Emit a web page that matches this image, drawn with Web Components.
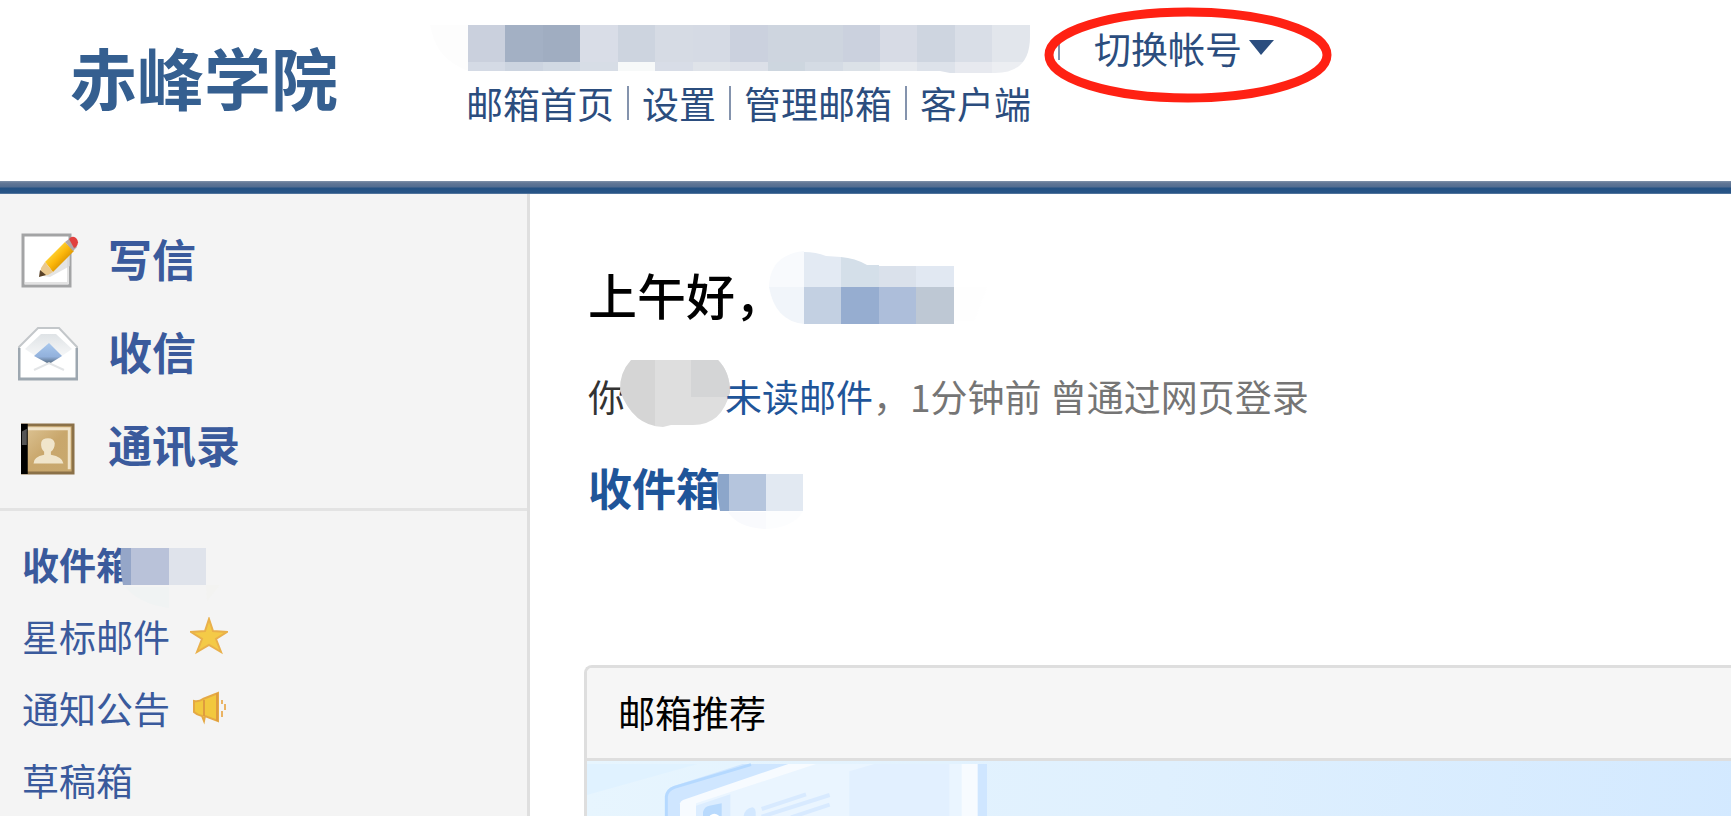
<!DOCTYPE html>
<html lang="zh-CN">
<head>
<meta charset="utf-8">
<title>赤峰学院邮箱</title>
<style>
  html, body {
    margin: 0;
    height: 100%;
  }

  body {
    overflow: hidden;
    background: #fff;
    color: #000;
    font-family: "Noto Sans CJK SC", sans-serif;
    font-size: 37px;
    line-height: 56px;
  }
</style>
</head>
<body>
<mail-app>
  <mail-header slot="header" name="赤峰学院"></mail-header>

  <mail-sidebar slot="sidebar">
    <side-action slot="actions" icon="compose">写信</side-action>
    <side-action slot="actions" icon="inbox">收信</side-action>
    <side-action slot="actions" icon="contacts">通讯录</side-action>
    <side-folder masked>收件箱</side-folder>
    <side-folder icon="star">星标邮件</side-folder>
    <side-folder icon="horn">通知公告</side-folder>
    <side-folder>草稿箱</side-folder>
  </mail-sidebar>

  <mail-welcome></mail-welcome>
  <mail-card>
    <span slot="title">邮箱推荐</span>
    <promo-banner></promo-banner>
  </mail-card>
</mail-app>

<script>
(function () {
  function define(name, html, setup) {
    const template = document.createElement('template');
    template.innerHTML = html;

    window.customElements.define(name, class extends HTMLElement {
      constructor() {
        super();
        this.attachShadow({mode: 'open'});
        this.shadowRoot.appendChild(template.content.cloneNode(true));
      }

      connectedCallback() {
        if (setup) {
          setup(this, this.shadowRoot);
        }
      }
    });
  }

  const icons = {
    compose: `
      <svg width="58" height="56" viewBox="0 0 58 56">
        <defs>
          <linearGradient id="wood" x1="0" y1="0" x2="1" y2="1">
            <stop offset=".2" stop-color="#ffe04a"/>
            <stop offset=".5" stop-color="#fbb60a"/>
            <stop offset=".8" stop-color="#c98300"/>
          </linearGradient>
        </defs>
        <path d="M2 2H49V53H2Z" fill="#fff" stroke="#a3a4a5" stroke-width="3"/>
        <path d="M4 50H47V23" fill="none" stroke="#e3e3e3" stroke-width="2"/>
        <path d="M22 43L42 25 49 16V33L29 44Z" fill="#d9d9d9" opacity=".7"/>
        <path d="M24 29L44 9 53 18 32 39Z" fill="url(#wood)"/>
        <path d="M24 29L20 35 19 43 27 42 32 39Z" fill="#eac990"/>
        <path d="M19 37L18 44 25 42Z" fill="#594127"/>
        <path d="M44 9L48 6 56 14 52 18Z" fill="#b0a7a8"/>
        <path d="M48 6Q51 2 55 5Q59 9 55 14L53 15Z" fill="#e1403f"/>
      </svg>`,
    inbox: `
      <svg width="60" height="56" viewBox="0 0 60 56">
        <defs>
          <linearGradient id="paper" x1="0" y1="0" x2="0" y2="1">
            <stop offset="0" stop-color="#dfe3e6"/>
            <stop offset="1" stop-color="#fff"/>
          </linearGradient>
          <linearGradient id="letter" x1="0" y1="0" x2="0" y2="1">
            <stop offset="0" stop-color="#a9c8ed"/>
            <stop offset=".65" stop-color="#92b1dc"/>
            <stop offset="1" stop-color="#526579"/>
          </linearGradient>
        </defs>
        <path d="M1 21L20 2H41L59 21V53H1Z" fill="#fff" stroke="#c3c7ca" stroke-width="2"/>
        <path d="M7 23L23 8H38L54 23 31 39Z" fill="url(#paper)"/>
        <path d="M16 30L31 17 44 30 31 38Z" fill="url(#letter)"/>
        <path d="M16 44L31 37 46 44" fill="none" stroke="#e3e5e7" stroke-width="2"/>
        <path d="M1 22V53H59V22" fill="none" stroke="#9da7b0" stroke-width="3"/>
      </svg>`,
    contacts: `
      <svg width="54" height="56" viewBox="0 -4 56 56">
        <defs>
          <linearGradient id="leather" x1="0" y1="0" x2="1" y2="1">
            <stop offset="0" stop-color="#dfc799"/>
            <stop offset=".5" stop-color="#c9a76c"/>
            <stop offset="1" stop-color="#c8a96f"/>
          </linearGradient>
        </defs>
        <path d="M1 1H54V51H1Z" fill="url(#leather)" stroke="#8b7148" stroke-width="3"/>
        <path d="M5 5H50V47" fill="none" stroke="#f1e4c9" stroke-width="3"/>
        <path d="M0 0H7V52H0Z" fill="#000"/>
        <path d="M1 8L6 5V22H1Z" fill="#555"/>
        <path d="M13 41Q13 34 24 32V29Q20 25 21 19Q22 15 28 15Q34 15 35 20Q35 26 31 29V32Q43 34 44 41Z" fill="#f0e5cb"/>
      </svg>`,
    star: `
      <svg width="38" height="38" viewBox="0 0 38 38">
        <path d="M19 2L23 14 37 15 26 22 31 35 19 28 7 35 12 22 1 15 15 14Z" fill="#f4ca47" stroke="#e9b04b" stroke-width="2"/>
      </svg>`,
    horn: `
      <svg width="38" height="38" viewBox="0 0 38 38">
        <path d="M4 12Q9 13 13 10L28 4V32L15 27 14 32 12 27Q7 26 4 23Z" fill="#f2c83e" stroke="#e5a944" stroke-width="2"/>
        <path d="M14 11V27M27 4V32" stroke="#df9c3e" stroke-width="2"/>
        <path d="M32 11V15M35 15V21M32 22V28" stroke="#eab363" stroke-width="2"/>
      </svg>`
  };

  // Pixelated blocks that hide private data, one drawing per place
  const masks = {
    account: `
      <svg width="600" height="50" viewBox="0 0 600 50">
        <defs><clipPath id="round"><path d="M0 0H600V12Q600 48 565 48H520L510 46H38Q8 34 2 8Z"/></clipPath></defs>
        <g class="cells" clip-path="url(#round)"></g>
      </svg>`,
    name: `
      <svg width="220" height="76" viewBox="0 0 220 76">
        <path d="M35 0Q0 4 0 37H35Z" fill="#f8fafd"/>
        <path d="M0 36H35V73Q6 70 0 36Z" fill="#f1f5fa"/>
        <path d="M35 1Q47 1 57 5L72 6V36H35Z" fill="#e3eaf3"/>
        <path d="M72 6Q86 7 98 14H110V36H72Z" fill="#d4dfe9"/>
        <path d="M110 15H147V36H110Z" fill="#dae1eb"/>
        <path d="M147 15H185V36H147Z" fill="#e1e8f2"/>
        <path d="M35 36H72V73H35Z" fill="#c3d0e2"/>
        <path d="M72 36H110V73H72Z" fill="#96add0"/>
        <path d="M110 36H147V73H110Z" fill="#adbeda"/>
        <path d="M147 36H185V73H147Z" fill="#bec8d4"/>
        <path d="M185 36H218L205 70H185Z" fill="#fefefe"/>
      </svg>`,
    unread: `
      <svg width="112" height="68" viewBox="0 0 112 68">
        <defs><clipPath id="blob"><path d="M12 0H99Q111 12 111 32Q103 65 74 65H52L44 67Q14 66 1 31Q0 13 12 0Z"/></clipPath></defs>
        <g clip-path="url(#blob)">
          <path d="M0 0H36V68H0Z" fill="#d5d5d5"/>
          <path d="M36 0H112V68H36Z" fill="#dedede"/>
          <path d="M72 0H112V37H72Z" fill="#d4d5d6"/>
        </g>
      </svg>`,
    folder: `
      <svg width="96" height="62" viewBox="0 0 96 62">
        <path d="M0 0H10V37H2Q-2 18 0 0Z" fill="#95a6c8"/>
        <path d="M10 0H48V37H10Z" fill="#b9c2d9"/>
        <path d="M48 0H85V37H48Z" fill="#dfe3eb"/>
        <path d="M5 39H48V60Q18 56 5 39Z" fill="#f0f3f3"/>
        <path d="M85 37H99L86 53Z" fill="#f3f3f1"/>
      </svg>`,
    count: `
      <svg width="88" height="56" viewBox="0 0 88 56">
        <path d="M0 0H11V37H2Q-2 18 0 0Z" fill="#8ca6ca"/>
        <path d="M11 0H48V37H11Z" fill="#b5c5dd"/>
        <path d="M48 0H85V37H48Z" fill="#e2e9f2"/>
        <path d="M10 38H48V55Q20 54 10 38Z" fill="#f9fafd"/>
        <path d="M48 37H85Q75 54 48 55Z" fill="#fcfdfe"/>
      </svg>`
  };

  const accountCells = [
    ['#cad0dd', '#d4dae5'], ['#a3b0c4', '#ccd4e0'], ['#a0adc1', '#d1d9e3'], ['#d9dde7', '#d7dde6'],
    ['#cdd4df', '#f7f9f9'], ['#d6dbe4', '#d8dde7'], ['#d5dae4', '#dfe3e9'], ['#cbd1de', '#dce0e8'],
    ['#ced5df', '#cdd6df'], ['#ced5df', '#d4dbe4'], ['#cbd1de', '#dbe1e7'], ['#d7dbe5', '#e6e9ee'],
    ['#ced5e0', '#dde2ea'], ['#d9dee7', '#e7e9ef'], ['#e2e6ec', '#eceef2']
  ];

  define('pixel-mask', `
    <style>
      :host {
        display: block;
        flex: none;
      }

      svg {
        display: block;
        overflow: visible;
      }
    </style>
  `, (host, root) => {
    root.innerHTML += masks[host.getAttribute('kind')];
    const cells = root.querySelector('.cells');
    if (cells) {
      let shapes = '<rect width="38" height="46" fill="#fdfdfd"/>';
      accountCells.forEach(([top, bottom], i) => {
        const x = Math.round(38 + i * 37.45);
        shapes += `<rect x="${x}" width="38" height="37" fill="${top}"/>
                   <rect x="${x}" y="37" width="38" height="12" fill="${bottom}"/>`;
      });
      cells.innerHTML = shapes;
    }
  });

  define('mail-app', `
    <style>
      :host {
        display: flex;
        flex-direction: column;
        min-height: 100vh;
      }

      .body {
        display: flex;
        flex: 1;
      }

      main {
        flex: 1;
        min-width: 0;
        padding: 70px 0 0 56px;
      }
    </style>
    <slot name="header"></slot>
    <div class="body">
      <slot name="sidebar"></slot>
      <main><slot></slot></main>
    </div>
  `);

  define('mail-header', `
    <style>
      :host {
        display: block;
      }

      header {
        display: flex;
        align-items: flex-start;
        padding: 20px 0;
        height: 141px;
      }

      .logo {
        flex: none;
        width: 360px;
        padding: 16px 0 0 70px;
        color: #355f90;
        font-size: 67px;
        font-weight: 700;
        line-height: 80px;
      }

      .account, nav {
        display: flex;
        align-items: center;
        white-space: nowrap;
      }

      .account {
        height: 55px;
      }

      pixel-mask {
        height: 46px;
      }

      nav {
        gap: 13px;
        padding: 0 36px;
      }

      a, button {
        color: #2b4d7e;
        text-decoration: none;
      }

      i {
        width: 2px;
        height: 34px;
        background: #8493ad;
      }

      .switch {
        position: relative;
        display: flex;
        align-items: center;
        padding-left: 28px;
      }

      .switch i {
        height: 24px;
        margin-right: 34px;
      }

      .ring {
        position: absolute;
        left: 13px;
        top: -14px;
        pointer-events: none;
      }

      button {
        display: flex;
        align-items: center;
        gap: 7px;
        margin: 0;
        padding: 0;
        border: 0;
        background: none;
        font: inherit;
        cursor: pointer;
      }

      .bar {
        height: 13px;
        background: linear-gradient(#7f91a9 0, #627796 2px, #526c90 6px, #245183 7px, #285587 12px, #7791b0);
      }
    </style>
    <header>
      <div class="logo"></div>
      <div>
        <div class="account">
          <pixel-mask kind="account"></pixel-mask>
          <div class="switch">
            <i></i>
            <button type="button">切换帐号<svg width="25" height="15" viewBox="0 0 25 15"><path d="M0 0H25L12 15Z" fill="#2b4d7e"/></svg></button>
            <svg class="ring" width="290" height="98" viewBox="0 0 290 98">
              <ellipse cx="145" cy="49" rx="139" ry="43" fill="none" stroke="#ff2113" stroke-width="9"/>
            </svg>
          </div>
        </div>
        <nav>
          <a href="#">邮箱首页</a><i></i><a href="#">设置</a><i></i><a href="#">管理邮箱</a><i></i><a href="#">客户端</a>
        </nav>
      </div>
    </header>
    <div class="bar"></div>
  `, (host, root) => {
    root.querySelector('.logo').textContent = host.getAttribute('name');
  });

  define('mail-sidebar', `
    <style>
      :host {
        display: block;
        box-sizing: border-box;
        flex: none;
        width: 530px;
        border-right: 3px solid #dfdfdf;
        background: #f4f4f4;
      }

      .actions {
        padding: 20px 0 15px;
        border-bottom: 3px solid #e3e3e3;
      }

      .folders {
        padding-top: 17px;
      }
    </style>
    <div class="actions"><slot name="actions"></slot></div>
    <div class="folders"><slot></slot></div>
  `);

  define('side-action', `
    <style>
      :host {
        display: block;
      }

      a {
        display: flex;
        align-items: center;
        height: 93px;
        color: #3a5a9c;
        font-size: 44px;
        font-weight: 700;
        text-decoration: none;
      }

      .icon {
        box-sizing: border-box;
        width: 108px;
        padding-left: 21px;
      }

      :host([icon="inbox"]) .icon {
        padding-left: 18px;
      }

      .label {
        padding-bottom: 6px;
      }

      svg {
        display: block;
      }
    </style>
    <a href="#"><span class="icon"></span><span class="label"><slot></slot></span></a>
  `, (host, root) => {
    root.querySelector('.icon').innerHTML = icons[host.getAttribute('icon')];
  });

  define('side-folder', `
    <style>
      :host {
        display: block;
      }

      a {
        position: relative;
        display: flex;
        align-items: center;
        gap: 20px;
        height: 72px;
        padding-left: 22px;
        color: #3a5a9c;
        text-decoration: none;
      }

      :host([masked]) a {
        font-weight: 700;
      }

      pixel-mask {
        position: absolute;
        left: 121px;
        top: 20px;
      }

      svg {
        display: block;
      }
    </style>
    <a href="#"><slot></slot></a>
  `, (host, root) => {
    const link = root.querySelector('a');
    if (host.hasAttribute('masked')) {
      link.insertAdjacentHTML('beforeend', '<pixel-mask kind="folder"></pixel-mask>');
    }
    if (host.hasAttribute('icon')) {
      link.insertAdjacentHTML('beforeend', icons[host.getAttribute('icon')]);
    }
  });

  define('mail-welcome', `
    <style>
      :host {
        display: block;
        padding-left: 2px;
        white-space: nowrap;
      }

      h1, p {
        display: flex;
        margin: 0;
      }

      h1 {
        height: 104px;
        font-size: 49px;
        font-weight: 500;
        line-height: 60px;
      }

      h1 pixel-mask {
        margin: -13px 0 0 -15px;
      }

      .status {
        height: 95px;
        color: #757575;
      }

      .status b {
        color: #333;
        font-weight: 400;
      }

      .status pixel-mask {
        margin: -8px -6px 0;
      }

      a {
        color: #1f5599;
        text-decoration: none;
      }

      .inbox {
        height: 202px;
        font-size: 44px;
        font-weight: 700;
        line-height: 48px;
      }

      .inbox pixel-mask {
        margin: 11px 0 0 -2px;
      }
    </style>
    <h1>上午好，<pixel-mask kind="name"></pixel-mask></h1>
    <p class="status"><b>你</b><pixel-mask kind="unread"></pixel-mask><a href="#">未读邮件</a><span>，1分钟前 曾通过网页登录</span></p>
    <p class="inbox"><a href="#">收件箱</a><pixel-mask kind="count"></pixel-mask></p>
  `);

  define('mail-card', `
    <style>
      :host {
        display: block;
        overflow: hidden;
        margin-left: -2px;
        border: solid #dedede;
        border-width: 3px 0 0 3px;
        border-radius: 8px 0 0 0;
      }

      h2 {
        margin: 0;
        padding: 16px 31px 18px;
        border-bottom: 3px solid #dedede;
        background: #f6f6f6;
        font-size: 37px;
        font-weight: 400;
      }
    </style>
    <h2><slot name="title"></slot></h2>
    <slot></slot>
  `);

  define('promo-banner', `
    <style>
      :host {
        display: block;
        height: 180px;
        background: linear-gradient(95deg, #e7f5fe, #dff0fe 50%, #d3e9ff);
      }

      svg {
        display: block;
      }
    </style>
    <svg width="574" height="180" viewBox="78 363 1722 540">
      <path d="M78 372H410L78 465Z" fill="#e0f2ff"/>
      <path d="M312 903V470Q314 446 338 438L545 372H1278V903Z" fill="#cfe6ff"/>
      <path d="M316 903V470Q318 450 340 442L570 374" fill="none" stroke="#b5d9ff" stroke-width="9"/>
      <path d="M357 903V490Q358 484 366 480L682 372H1250V903Z" fill="#f7fbff"/>
      <path d="M405 903V490L765 372H1202V903Z" fill="#eaf5ff"/>
      <path d="M865 903V394L940 372H1165V903Z" fill="#e2f0ff"/>
      <path d="M405 903V497L508 463V903Z" fill="#dcedff"/>
      <path d="M426 903V516Q430 500 445 497L482 490V903Z" fill="#b9dafd"/>
      <circle cx="460" cy="538" r="17" fill="#fff"/>
      <path d="M548 528Q552 505 574 502Q586 503 584 528Z" fill="#d3e8ff"/>
      <path d="M602 507L735 463M602 530L806 465M690 532L806 494" stroke="#d8eaff" stroke-width="12"/>
    </svg>
  `);
})();
</script>
</body>
</html>
